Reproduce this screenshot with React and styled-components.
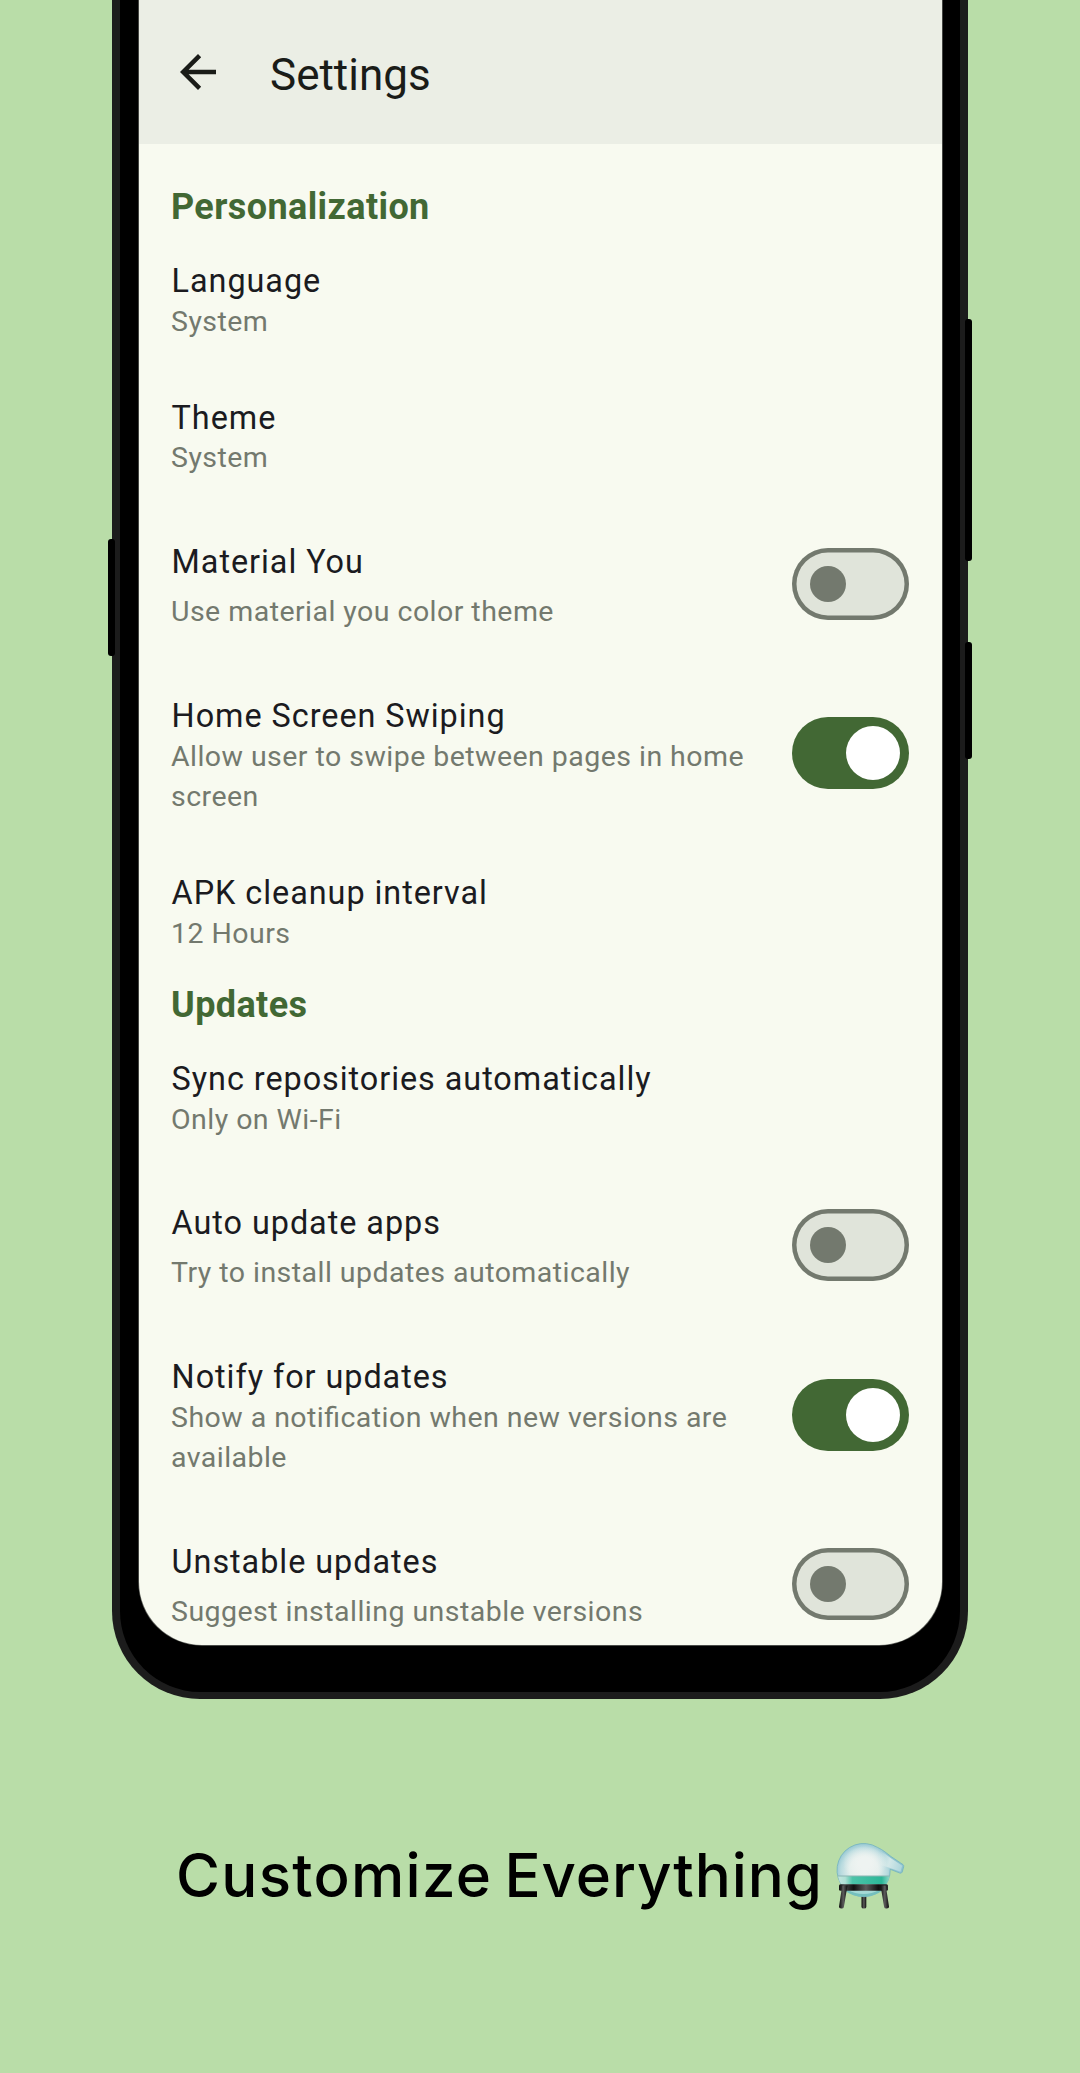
import React from "react";
import styled, { createGlobalStyle } from "styled-components";

const GlobalStyle = createGlobalStyle`
  *, *::before, *::after { box-sizing: border-box; }
  body { margin: 0; background: #b9dda8; }
`;

const Page = styled.main`
  display: flex;
  flex-direction: column;
  width: 1080px;
  height: 2073px;
  padding-left: 112px;
  overflow: hidden;
  background: #b9dda8;
  font-family: Roboto, "Liberation Sans", sans-serif;
`;

const Phone = styled.section`
  position: relative;
  flex: none;
  width: 856px;
  height: 1699px;
  padding: 0 18px 47px 18.5px;
  border: solid #1c1c1c;
  border-width: 0 8px 7px;
  border-radius: 0 0 88px 88px;
  background: #000;
`;

const SideButton = styled.span`
  position: absolute;
  ${(p) => p.$side}: -12px;
  top: ${(p) => p.$top}px;
  width: 7px;
  height: ${(p) => p.$height}px;
  border-radius: 3px;
  background: #000;
`;

const Screen = styled.div`
  height: 100%;
  overflow: hidden;
  border-radius: 0 0 63px 63px;
  background: #f8faf0;
  box-shadow: 0 0 0 0.7px #62645f;
`;

const AppBar = styled.header`
  display: flex;
  align-items: center;
  gap: 45px;
  height: 144px;
  padding-left: 32.5px;
  background: #ebeee5;
  color: #1a1c18;
`;

const BackIcon = styled.svg`
  width: 54px;
  height: 54px;
  fill: currentColor;
`;

const ScreenTitle = styled.h1`
  margin: 5px 0 0;
  font-size: 44px;
  font-weight: 400;
  line-height: 52px;
`;

const Group = styled.section`
  padding: ${(p) => p.$top}px 33.5px 0 32.5px;
`;

const GroupTitle = styled.h2`
  margin: 0 0 13px;
  font-size: 36px;
  font-weight: 700;
  line-height: 44px;
  letter-spacing: 0.4px;
  color: #426834;
`;

const Row = styled.div`
  display: flex;
  align-items: center;
  gap: 27px;
  height: ${(p) => p.$height}px;
  padding-bottom: 18.5px;
`;

const RowText = styled.div`
  flex: 1;
  align-self: flex-start;
  padding-top: ${(p) => p.$top}px;
`;

const Label = styled.div`
  padding-left: 0.6px;
  font-size: 32.4px;
  line-height: 40px;
  letter-spacing: 0.95px;
  color: #1b1b1f;
  white-space: nowrap;
`;

const Hint = styled.div`
  margin-top: ${(p) => (p.$loose ? 10 : 0.6)}px;
  font-size: 28.5px;
  line-height: 40.3px;
  letter-spacing: 0.46px;
  font-feature-settings: "liga" 1;
  color: #73796e;
`;

const Track = styled.div`
  display: flex;
  align-items: center;
  justify-content: ${(p) => (p.$on ? "flex-end" : "flex-start")};
  flex: none;
  width: 117px;
  height: 72px;
  padding: ${(p) => (p.$on ? "0 9px" : "0 18px")};
  border-radius: 36px;
  background: ${(p) => (p.$on ? "#426834" : "#e0e4da")};
  box-shadow: ${(p) => (p.$on ? "none" : "inset 0 0 0 4.5px #73796e")};
`;

const Thumb = styled.span`
  width: ${(p) => (p.$on ? 54 : 36)}px;
  height: ${(p) => (p.$on ? 54 : 36)}px;
  border-radius: 50%;
  background: ${(p) => (p.$on ? "#fff" : "#73796e")};
`;

const Caption = styled.footer`
  display: flex;
  align-items: flex-start;
  padding: 141px 0 0 64px;
  color: #000;
`;

const Word = styled.span`
  flex: none;
  width: ${(p) => p.$width}px;
  font-family: Inter, "Liberation Sans", sans-serif;
  font-size: 60px;
  font-weight: 500;
  line-height: 70px;
  letter-spacing: ${(p) => p.$spacing}px;
  white-space: nowrap;
`;

const Flask = styled.svg`
  flex: none;
  width: 72px;
  height: 72px;
  margin-top: 1px;
`;

const personalization = [
  { label: "Language", hint: "System", height: 136.7 },
  { label: "Theme", hint: "System", height: 137 },
  { label: "Material You", hint: "Use material you color theme", height: 154.3, on: false },
  { label: "Home Screen Swiping", hint: "Allow user to swipe between pages in home screen", height: 184, on: true },
  { label: "APK cleanup interval", hint: "12 Hours", height: 129 },
];

const updates = [
  { label: "Sync repositories automatically", hint: "Only on Wi-Fi", height: 137.2 },
  { label: "Auto update apps", hint: "Try to install updates automatically", height: 154, on: false },
  { label: "Notify for updates", hint: "Show a notification when new versions are available", height: 185.2, on: true },
  { label: "Unstable updates", hint: "Suggest installing unstable versions", height: 154, on: false },
];

function Setting({ label, hint, height, on }) {
  const switchable = on !== undefined;
  return (
    <Row $height={height}>
      <RowText $top={switchable ? 26 : 19}>
        <Label>{label}</Label>
        <Hint $loose={on === false}>{hint}</Hint>
      </RowText>
      {switchable && (
        <Track $on={on} role="switch" aria-checked={on}>
          <Thumb $on={on} />
        </Track>
      )}
    </Row>
  );
}

function FlaskIcon() {
  return (
    <Flask viewBox="0 0 72 72" aria-hidden="true">
      <defs>
        <radialGradient id="glass" gradientUnits="userSpaceOnUse" cx="29" cy="30" r="29">
          <stop offset="0" stopColor="#eef3f1" />
          <stop offset="0.5" stopColor="#e2eeec" />
          <stop offset="0.8" stopColor="#b9dbdf" />
          <stop offset="1" stopColor="#8ec3cf" />
        </radialGradient>
        <radialGradient id="shine">
          <stop offset="0.3" stopColor="#eef3f1" />
          <stop offset="1" stopColor="#eef3f1" stopOpacity="0" />
        </radialGradient>
        <linearGradient id="spout" gradientUnits="userSpaceOnUse" x1="42" y1="20" x2="68" y2="28">
          <stop offset="0" stopColor="#d9ebea" stopOpacity="0" />
          <stop offset="0.45" stopColor="#d3e8e8" />
          <stop offset="1" stopColor="#a9d3da" />
        </linearGradient>
        <linearGradient id="liquid" x1="0" x2="1" y1="0" y2="0">
          <stop offset="0" stopColor="#c3e6df" />
          <stop offset="0.14" stopColor="#b0e0d5" />
          <stop offset="0.28" stopColor="#4cc4a9" />
          <stop offset="0.85" stopColor="#2cb798" />
          <stop offset="1" stopColor="#8fd9c8" />
        </linearGradient>
        <linearGradient id="ring" x1="0" x2="1" y1="0" y2="0">
          <stop offset="0" stopColor="#111" />
          <stop offset="0.12" stopColor="#444" />
          <stop offset="0.3" stopColor="#111" />
          <stop offset="0.55" stopColor="#5a5a5a" />
          <stop offset="0.8" stopColor="#111" />
          <stop offset="1" stopColor="#2b2b2b" />
        </linearGradient>
        <linearGradient id="leg" x1="0" x2="1" y1="0" y2="0">
          <stop offset="0" stopColor="#0b0b0b" />
          <stop offset="0.5" stopColor="#5c5c5c" />
          <stop offset="1" stopColor="#0b0b0b" />
        </linearGradient>
      </defs>
      <path d="M26.500 55h4.800v11q0 1.500-2.400 1.500T26.500 66z" fill="url(#leg)" />
      <path
        d="M42.500 6.400C48 8.800 52 12.500 56 15.500L68 23.600q1 .9.700 2.100l-1.500 5.400q-.7 1.600-2.500.9L55.200 28.300A26.600 26.600 0 1 1 42.500 6.400z"
        fill="url(#glass)"
        stroke="#6fb0c0"
        strokeOpacity="0.75"
        strokeWidth="1"
      />
      <path d="M42 9C48 11 52 14.500 56 17.200L67.200 24.800 65.500 30.800 55 27 46 24z" fill="url(#spout)" />
      <ellipse cx="30" cy="22" rx="22" ry="17" fill="url(#shine)" />
      <path d="M3 35H54.500Q53.500 40 51 43.500H6.500Q4 40 3 35z" fill="url(#liquid)" />
      <path d="M3 35H54.500" stroke="#8bb5b2" strokeWidth="1" />
      <path d="M9 49H48Q40 55.600 28.500 55.600T9 49z" fill="#74bfbd" />
      <path d="M13 49H44Q37 53 28.500 53T13 49z" fill="#a5d9d6" />
      <rect x="4" y="43.300" width="49" height="6.500" rx="1.500" fill="url(#ring)" />
      <path d="M7.200 44.500h5.300L8.800 66.300q-.4 1.400-2.600 1.200-2.300-.2-2.200-1.700z" fill="url(#leg)" />
      <path d="M45.500 44.500h5.300L54 65.800q.1 1.500-2.200 1.700-2.200.2-2.600-1.200z" fill="url(#leg)" />
    </Flask>
  );
}

export default function App() {
  return (
    <>
      <GlobalStyle />
      <Page>
        <Phone>
          <Screen>
            <AppBar>
              <BackIcon viewBox="0 0 24 24" aria-label="Back">
                <path d="M20 11H7.830l5.590-5.590L12 4l-8 8 8 8 1.410-1.410L7.830 13H20v-2z" />
              </BackIcon>
              <ScreenTitle>Settings</ScreenTitle>
            </AppBar>
            <Group $top={41}>
              <GroupTitle>Personalization</GroupTitle>
              {personalization.map((s) => <Setting key={s.label} {...s} />)}
            </Group>
            <Group $top={0}>
              <GroupTitle>Updates</GroupTitle>
              {updates.map((s) => <Setting key={s.label} {...s} />)}
            </Group>
          </Screen>
          <SideButton $side="left" $top={539} $height={117} />
          <SideButton $side="right" $top={319} $height={242} />
          <SideButton $side="right" $top={642} $height={117} />
        </Phone>
        <Caption>
          <Word $spacing={1.3} $width={328.5}>Customize</Word>
          <Word $spacing={0.9} $width={330}>Everything</Word>
          <FlaskIcon />
        </Caption>
      </Page>
    </>
  );
}
